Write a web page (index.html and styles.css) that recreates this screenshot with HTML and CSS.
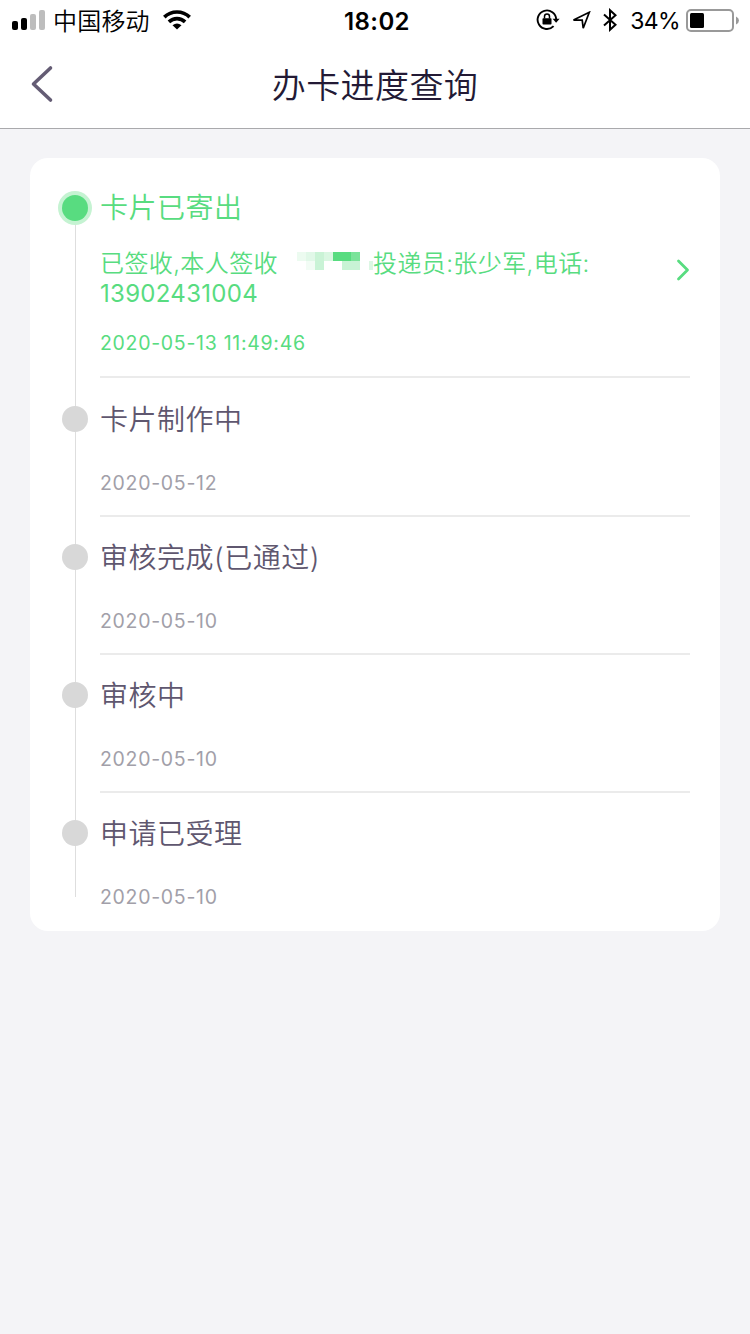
FILE: index.html
```html
<!DOCTYPE html>
<html lang="zh-CN">
<head>
  <meta charset="UTF-8">
  <meta name="viewport" content="width=device-width, initial-scale=1.0">
  <title>办卡进度查询</title>
  <link rel="stylesheet" href="styles.css">
</head>
<body>
  <header class="header">
    <div class="status-bar">
      <div class="status-left">
        <svg class="signal" width="34" height="20" viewBox="0 0 34 20">
          <rect x="0" y="11" width="6" height="9" rx="2" fill="#000"/>
          <rect x="9" y="8" width="6" height="12" rx="2" fill="#000"/>
          <rect x="18" y="4" width="6" height="16" rx="2" fill="#bdbdbd"/>
          <rect x="27" y="0" width="6" height="20" rx="2" fill="#bdbdbd"/>
        </svg>
        <span class="carrier">中国移动</span>
        <svg class="wifi" width="28" height="20" viewBox="0 0 28 20">
          <g fill="none" stroke="#000" stroke-width="3.6">
            <path d="M1.3 7.1C8.3 .2 19.7 .2 26.7 7.1"/>
            <path d="M5.9 11.9C10.5 7.5 17.5 7.5 22.1 11.9"/>
          </g>
          <path d="M9.5 15.3Q14 11.7 18.5 15.3L14 19.6Z"/>
        </svg>
      </div>
      <span class="clock">18:02</span>
      <div class="status-right">
        <svg class="lock" width="24" height="22" viewBox="0 0 24 22">
          <path d="M17.6 17.2A9.3 9.3 0 1 1 20.2 10.5" fill="none" stroke="#000" stroke-width="1.9"/>
          <path d="M16.6 9.8H23.6L20.1 13.8Z"/>
          <rect x="6.5" y="9.3" width="9" height="6.2" rx=".8"/>
          <path d="M8.5 9.5V7.5a2.5 2.5 0 0 1 5 0V9.5" fill="none" stroke="#000" stroke-width="1.5"/>
        </svg>
        <svg class="location" width="19" height="19" viewBox="0 0 19 19">
          <path d="M1.5 9.1L17.3 1.3L11.2 17.2L10.2 9.2Z" fill="none" stroke="#000" stroke-width="1.7"/>
        </svg>
        <svg class="bluetooth" width="14" height="24" viewBox="0 0 14 24">
          <path d="M1 6.5L12.5 16.8L7 21.8V2.2L12.5 7.2L1 17.5" fill="none" stroke="#000" stroke-width="2"/>
        </svg>
        <span class="percent">34%</span>
        <svg class="battery" width="53" height="23" viewBox="0 0 53 23">
          <rect x="1" y="1" width="46" height="21" rx="4" fill="none" stroke="#999" stroke-width="2"/>
          <rect x="4" y="4" width="14" height="15" rx="1.5"/>
          <path d="M50 7.5Q53 9 53 11.5T50 15.5Z" fill="#999"/>
        </svg>
      </div>
    </div>
    <div class="nav">
      <svg class="back" width="24" height="40" viewBox="0 0 24 40">
        <path d="M20.5 4L3.5 20L20.5 36" fill="none" stroke="#645c74" stroke-width="3.6" stroke-linecap="round" stroke-linejoin="round"/>
      </svg>
      <h1>办卡进度查询</h1>
    </div>
  </header>

  <main class="card">
    <section class="step active">
      <div class="rail"><i class="dot"></i></div>
      <div class="content">
        <h2>卡片已寄出</h2>
        <div class="detail">
          <p>已签收,本人签收<svg class="mosaic" width="77" height="20" viewBox="0 0 77 20">
            <path d="M0 0h9v9h-9z" fill="#ecfbf0"/>
            <path d="M9 0h9v9h-9z" fill="#e1f8e8"/>
            <path d="M18 0h9v9h-9z" fill="#caf3d6"/>
            <path d="M27 0h9v9h-9z" fill="#daf7e2"/>
            <path d="M36 0h18v9h-18z" fill="#58dc80"/>
            <path d="M54 0h9v9h-9z" fill="#7be39a"/>
            <path d="M9 9h9v9h-9z" fill="#f2fcf5"/>
            <path d="M18 9h9v9h-9z" fill="#c9f3d6"/>
            <path d="M45 9h18v9h-18z" fill="#c8f3d5"/>
            <path d="M72 9h4v9h-4z" fill="#dcf7e4"/>
          </svg>投递员:张少军,电话:<br><span class="phone">13902431004</span></p>
          <svg class="arrow" width="14" height="24" viewBox="0 0 14 24">
            <path d="M2.5 3L11.5 12L2.5 21" fill="none" stroke="#58dc80" stroke-width="2.8" stroke-linecap="round" stroke-linejoin="round"/>
          </svg>
        </div>
        <time>2020-05-13 11:49:46</time>
      </div>
    </section>
    <section class="step tall">
      <div class="rail"><i class="dot"></i></div>
      <div class="content">
        <h2>卡片制作中</h2>
        <time>2020-05-12</time>
      </div>
    </section>
    <section class="step">
      <div class="rail"><i class="dot"></i></div>
      <div class="content">
        <h2>审核完成(已通过)</h2>
        <time>2020-05-10</time>
      </div>
    </section>
    <section class="step">
      <div class="rail"><i class="dot"></i></div>
      <div class="content">
        <h2>审核中</h2>
        <time>2020-05-10</time>
      </div>
    </section>
    <section class="step">
      <div class="rail"><i class="dot"></i></div>
      <div class="content">
        <h2>申请已受理</h2>
        <time>2020-05-10</time>
      </div>
    </section>
  </main>
</body>
</html>
```
FILE: styles.css
```css
* {
  box-sizing: border-box;
}

body {
  margin: 0;
  background: #f4f4f7;
  font-family: Inter, "Noto Sans CJK SC", sans-serif;
  color: #5f576f;
}

h1, h2, p {
  margin: 0;
  font-weight: 350;
}

svg {
  display: block;
  flex: none;
}

.header {
  height: 129px;
  background: #fff;
  border-bottom: 1px solid #a9a9ac;
}

.status-bar {
  display: grid;
  grid-template-columns: 1fr auto 1fr;
  align-items: center;
  height: 40px;
  padding: 0 11px 0 12px;
  color: #000;
}

.status-left, .status-right {
  display: flex;
  align-items: center;
}

.status-right {
  justify-content: flex-end;
}

.carrier {
  margin: 0 13px 0 7px;
  padding-top: 3px;
  font-size: 24px;
  font-weight: 350;
  line-height: 37px;
  letter-spacing: 0.2px;
}

.clock {
  padding: 2px 0 0 3px;
  font-size: 24px;
  font-weight: 600;
  letter-spacing: 0.4px;
}

.location {
  margin-left: 12px;
}

.bluetooth {
  margin-left: 12px;
}

.percent {
  margin: 0 6px 0 13px;
  padding-top: 1px;
  font-size: 23px;
  letter-spacing: -0.6px;
}

.nav {
  display: grid;
  grid-template-columns: 100px 1fr 100px;
  align-items: center;
  height: 88px;
}

.back {
  margin-left: 30px;
}

.nav h1 {
  padding-top: 3px;
  font-size: 34px;
  line-height: 50px;
  letter-spacing: 0.4px;
  text-align: center;
  color: #231a35;
}

.card {
  margin: 29px 30px 0;
  padding-top: 9px;
  background: #fff;
  border-radius: 18px;
}

.step {
  display: flex;
  height: 138px;
}

.step.active {
  height: 211px;
}

.step.tall {
  height: 139px;
}

.rail {
  position: relative;
  width: 70px;
  padding: 27px 0 0 32px;
}

.active .rail, .tall .rail {
  padding-top: 28px;
}

/* vertical line running through the dots */
.rail::before {
  content: "";
  position: absolute;
  top: 0;
  bottom: 0;
  left: 45px;
  width: 1px;
  background: #dedede;
}

.active .rail::before {
  top: 41px;
}

.step:last-child .rail::before {
  bottom: 34px;
}

.dot {
  position: relative;
  display: block;
  width: 26px;
  height: 26px;
  border-radius: 50%;
  background: #d8d8d8;
}

.active .dot {
  background: #58dc80;
  box-shadow: 0 0 0 4px #c5f3d2;
}

.content {
  width: 590px;
  padding-top: 21px;
  border-bottom: 2px solid #ebebeb;
}

.tall .content {
  padding-top: 22px;
}

.step:last-child .content {
  border-bottom: none;
}

h2 {
  font-size: 28px;
  line-height: 40px;
  letter-spacing: 0.5px;
}

time {
  display: block;
  margin-top: 28px;
  font-size: 19.5px;
  font-weight: 400;
  line-height: 30px;
  letter-spacing: 0.7px;
  color: #a29fa9;
}

.detail {
  display: flex;
  justify-content: space-between;
  margin-top: 21px;
}

.detail p {
  font-size: 24px;
  line-height: 30px;
  letter-spacing: 0.4px;
  white-space: nowrap;
}

.phone {
  font-weight: 400;
  letter-spacing: 0.3px;
}

.mosaic {
  display: inline-block;
  margin: 0 -1px 0 19px;
  vertical-align: 0;
}

.arrow {
  margin-top: 9px;
}

.active h2, .active p, .active time {
  color: #58dc80;
}

.active time {
  margin-top: 19px;
}
```
